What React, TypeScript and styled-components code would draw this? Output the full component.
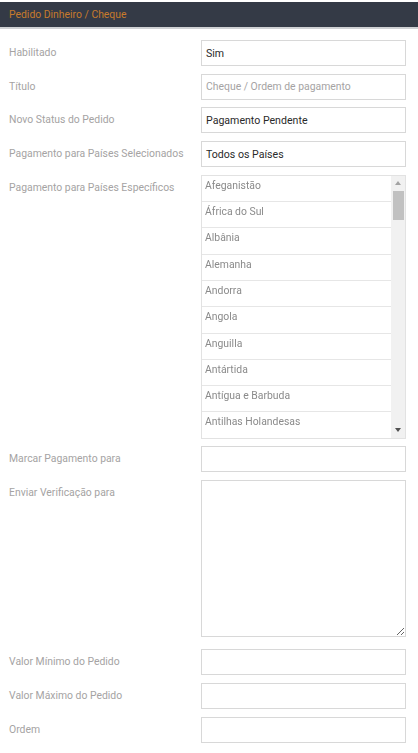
import React from "react";
import styled, { createGlobalStyle } from "styled-components";

const Global = createGlobalStyle`
  html, body { margin: 0; padding: 0; background: #fff; }
  body { font-family: Roboto, "Liberation Sans", Arial, sans-serif; }
  * { box-sizing: border-box; }
`;

const Page = styled.div`
  width: 418px;
  padding-top: 2px;
`;

const Header = styled.div`
  height: 27px;
  background: #343a46;
  border-bottom: 2px solid #cfd1d4;
  display: flex;
  align-items: center;
  padding-left: 9px;
  color: #c77a2c;
  font-size: 10.4px;
`;

const Form = styled.div`
  display: flex;
  flex-direction: column;
  gap: 7.7px;
  padding: 11px 13px 10px 9px;
`;

const Row = styled.div<{ $extra?: number }>`
  display: grid;
  grid-template-columns: 192px 205px;
  margin-bottom: ${(p) => p.$extra ?? 0}px;
`;

const Label = styled.div`
  font-size: 10.4px;
  color: #a5a3a3;
  padding-top: 6px;
  line-height: 13px;
  white-space: nowrap;
`;

const Input = styled.input`
  width: 205px;
  height: 26px;
  border: 1px solid #d8d8d8;
  padding: 0 4px;
  font-family: Roboto, "Liberation Sans", Arial, sans-serif;
  font-size: 10.4px;
  color: #333;
  outline: none;
  border-radius: 0;
  &::placeholder { color: #a5a3a3; }
`;

const Select = styled.div`
  width: 205px;
  height: 26px;
  border: 1px solid #d8d8d8;
  padding: 0 4px;
  display: flex;
  align-items: center;
  font-size: 10.6px;
  color: #2a2a2a;
`;

const TextArea = styled.textarea`
  width: 205px;
  height: 157px;
  border: 1px solid #d8d8d8;
  resize: both;
  outline: none;
  display: block;
  margin: 0;
  border-radius: 0;
`;

const ListBox = styled.div`
  width: 205px;
  height: 264px;
  border: 1px solid #e2e2e2;
  display: flex;
  overflow: hidden;
`;

const Items = styled.div`
  flex: 1;
  display: flex;
  flex-direction: column;
`;

const Item = styled.div`
  height: 26.3px;
  flex: none;
  border-bottom: 1px solid #e6e6e6;
  padding: 3px 3px 0;
  font-size: 10.4px;
  color: #8a8a8a;
  filter: blur(0.6px);
  white-space: nowrap;
`;

const ScrollTrack = styled.div`
  width: 14px;
  flex: none;
  background: #f1f1f1;
  display: flex;
  flex-direction: column;
  align-items: center;
`;

const Arrow = styled.div<{ $down?: boolean }>`
  height: 15px;
  width: 100%;
  display: flex;
  align-items: center;
  justify-content: center;
  &::after {
    content: "";
    width: 0;
    height: 0;
    border-left: 3.5px solid transparent;
    border-right: 3.5px solid transparent;
    ${(p) =>
      p.$down
        ? "border-top: 4px solid #505050;"
        : "border-bottom: 4px solid #a3a3a3;"}
  }
`;

const Thumb = styled.div`
  width: 11px;
  height: 29px;
  background: #c1c1c1;
`;

const Spacer = styled.div`
  flex: 1;
`;

const countries = [
  "Afeganistão",
  "África do Sul",
  "Albânia",
  "Alemanha",
  "Andorra",
  "Angola",
  "Anguilla",
  "Antártida",
  "Antígua e Barbuda",
  "Antilhas Holandesas",
];

export default function App() {
  return (
    <Page>
      <Global />
      <Header>Pedido Dinheiro / Cheque</Header>
      <Form>
        <Row>
          <Label>Habilitado</Label>
          <Select>Sim</Select>
        </Row>
        <Row>
          <Label>Título</Label>
          <Input placeholder="Cheque / Ordem de pagamento" />
        </Row>
        <Row>
          <Label>Novo Status do Pedido</Label>
          <Select>Pagamento Pendente</Select>
        </Row>
        <Row>
          <Label>Pagamento para Países Selecionados</Label>
          <Select>Todos os Países</Select>
        </Row>
        <Row>
          <Label>Pagamento para Países Específicos</Label>
          <ListBox>
            <Items>
              {countries.map((c) => (
                <Item key={c}>{c}</Item>
              ))}
            </Items>
            <ScrollTrack>
              <Arrow />
              <Thumb />
              <Spacer />
              <Arrow $down />
            </ScrollTrack>
          </ListBox>
        </Row>
        <Row>
          <Label>Marcar Pagamento para</Label>
          <Input />
        </Row>
        <Row $extra={4.5}>
          <Label>Enviar Verificação para</Label>
          <TextArea />
        </Row>
        <Row>
          <Label>Valor Mínimo do Pedido</Label>
          <Input />
        </Row>
        <Row>
          <Label>Valor Máximo do Pedido</Label>
          <Input />
        </Row>
        <Row>
          <Label>Ordem</Label>
          <Input />
        </Row>
      </Form>
    </Page>
  );
}
